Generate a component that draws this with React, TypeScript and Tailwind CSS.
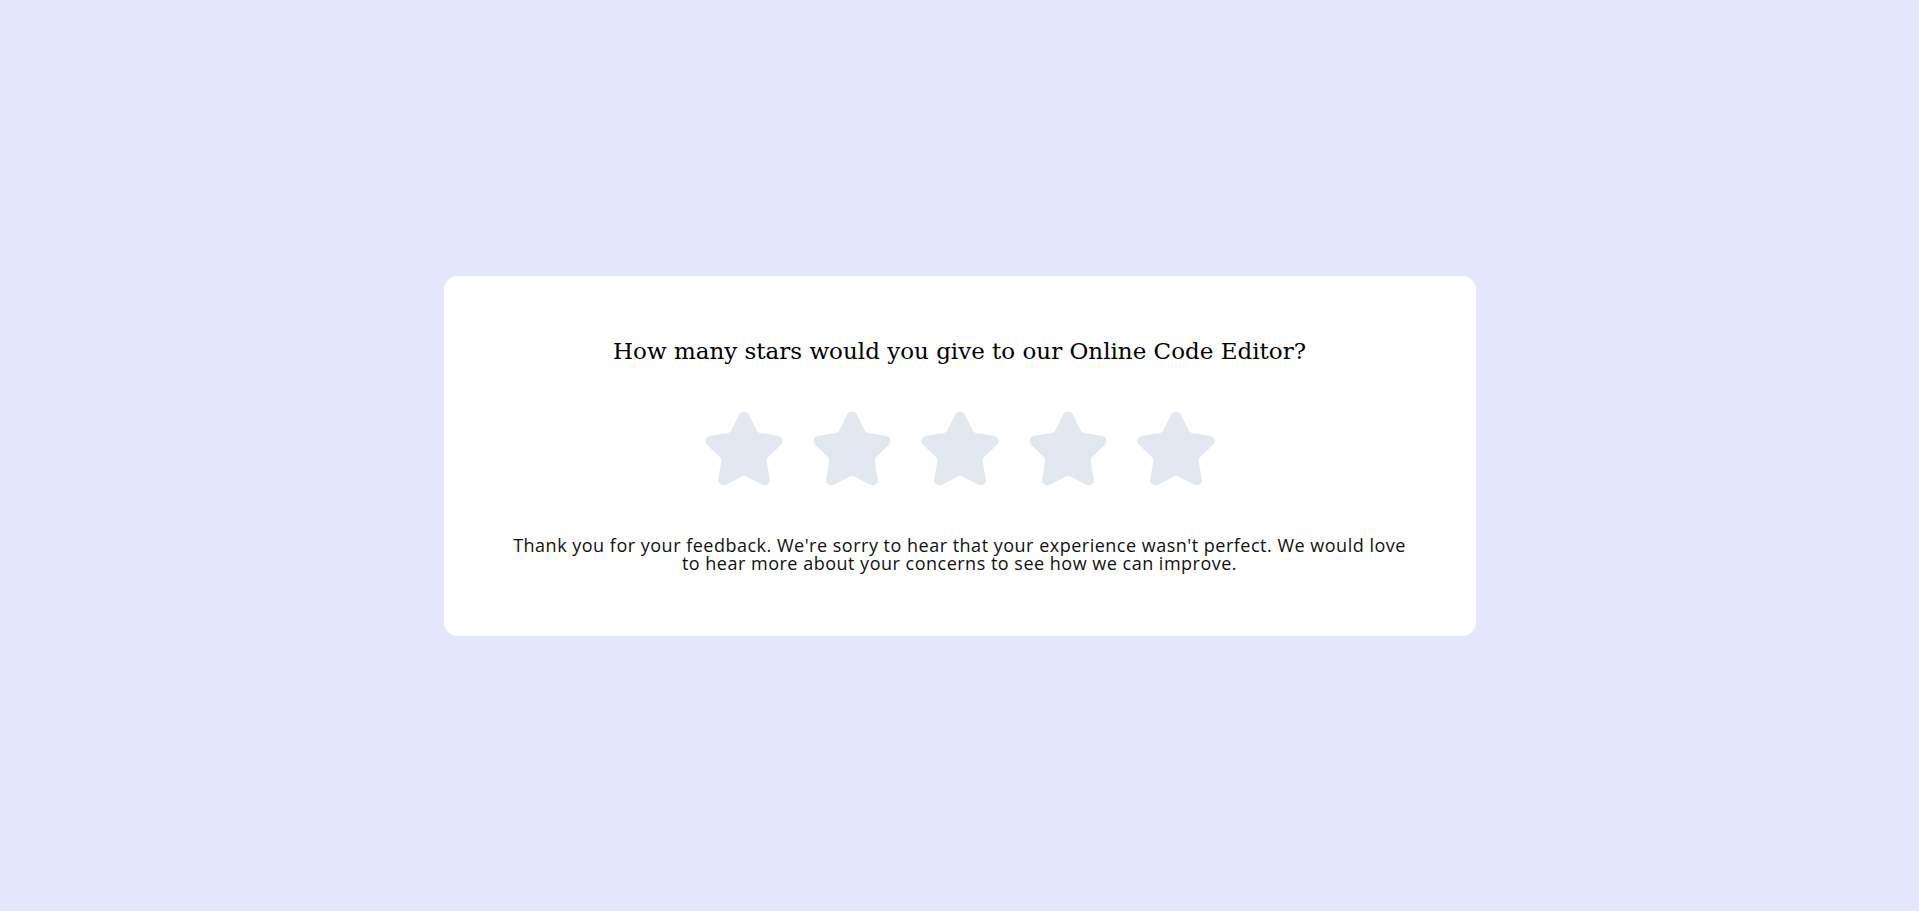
import React from "react";

function Star() {
  return (
    <svg
      width="84"
      height="84"
      viewBox="0 0 24 24"
      fill="#e2e8f0"
      stroke="#e2e8f0"
      strokeWidth="2"
      strokeLinecap="round"
      strokeLinejoin="round"
      className="shrink-0"
    >
      <path d="M11.525 2.295a.53.53 0 0 1 .95 0l2.31 4.679a2.123 2.123 0 0 0 1.595 1.16l5.166.756a.53.53 0 0 1 .294.904l-3.736 3.638a2.123 2.123 0 0 0-.611 1.878l.882 5.14a.53.53 0 0 1-.771.56l-4.618-2.428a2.122 2.122 0 0 0-1.973 0L6.396 21.01a.53.53 0 0 1-.77-.56l.881-5.139a2.122 2.122 0 0 0-.611-1.879L2.16 9.795a.53.53 0 0 1 .294-.906l5.165-.755a2.122 2.122 0 0 0 1.597-1.16z" />
    </svg>
  );
}

export default function App() {
  return (
    <div className="min-h-screen w-full bg-[#e4e7fb] flex items-center justify-center">
      <div className="w-[1032px] bg-white rounded-[14px] flex flex-col items-center pt-[61px] pb-[64px]">
        <h1 className="text-[23px] leading-[28px] text-black font-normal font-['DejaVu_Serif',serif]">
          How many stars would you give to our Online Code Editor?
        </h1>
        <div className="mt-[43px] flex gap-[24px]">
          <Star />
          <Star />
          <Star />
          <Star />
          <Star />
        </div>
        <div className="mt-[44px] flex flex-col items-center text-[18px] leading-[18px] tracking-[0.5px] text-[#111111] font-['Open_Sans',sans-serif] whitespace-nowrap">
          <div className="h-[18px] overflow-visible">
            Thank you for your feedback. We're sorry to hear that your experience wasn't perfect. We would love
          </div>
          <div className="h-[18px] overflow-visible">
            to hear more about your concerns to see how we can improve.
          </div>
        </div>
      </div>
    </div>
  );
}
